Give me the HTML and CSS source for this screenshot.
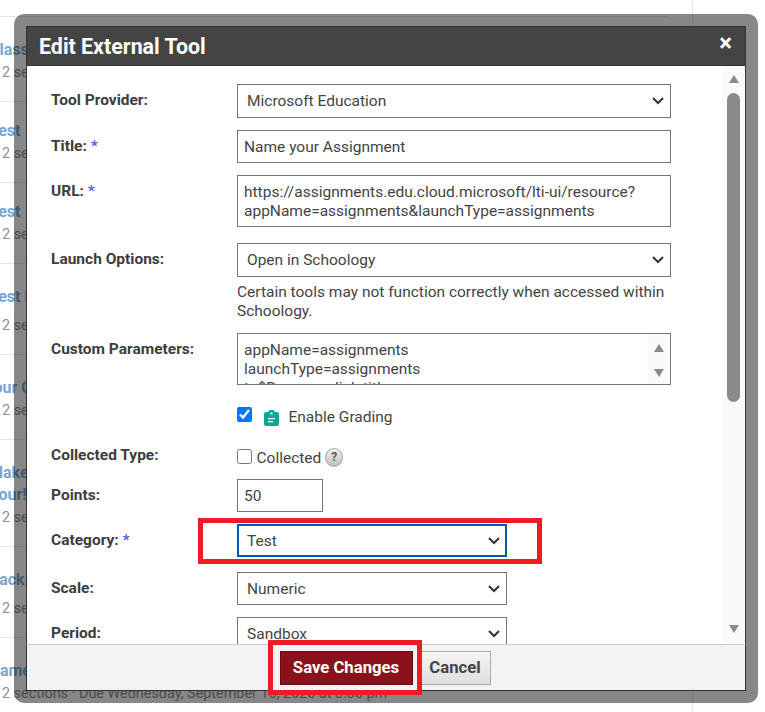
FILE: index.html
```html
<!DOCTYPE html>
<html lang="en">
  <head>
    <meta charset="UTF-8" />
    <meta name="viewport" content="width=device-width, initial-scale=1.0" />
    <title>Edit External Tool</title>
    <link rel="stylesheet" href="styles.css">
  </head>
  <body>
    <div class="page">
      <div class="list">
        <div class="item item-first">
          <div class="item-title">Class</div>
          <div class="item-sub">2 sections</div>
        </div>
        <div class="item item-short">
          <div class="item-title">Test</div>
          <div class="item-sub">2 sections</div>
        </div>
        <div class="item item-short">
          <div class="item-title">Test</div>
          <div class="item-sub">2 sections</div>
        </div>
        <div class="item">
          <div class="item-title">Test l</div>
          <div class="item-sub sub-far">2 sections</div>
        </div>
        <div class="item">
          <div class="item-title title-far">Your C</div>
          <div class="item-sub">2 sections</div>
        </div>
        <div class="item">
          <div class="item-title">Make</div>
          <div class="item-title">Your!</div>
          <div class="item-sub">2 sections</div>
        </div>
        <div class="item">
          <div class="item-title">Back</div>
          <div class="item-sub sub-far">2 sections</div>
        </div>
        <div class="item item-last">
          <div class="item-title">Game</div>
          <div class="item-sub">2 sections · Due Wednesday, September 16, 2026 at 3:30 pm ·</div>
        </div>
      </div>
    </div>

    <div class="modal">
      <div class="modal-head">
        <h1>Edit External Tool</h1>
        <span class="close">×</span>
      </div>
      <div class="modal-body">
        <form class="form">
          <div class="row row-provider">
            <label>Tool Provider:</label>
            <select class="field"><option>Microsoft Education</option></select>
          </div>
          <div class="row row-title">
            <label>Title: <span class="req">*</span></label>
            <input class="field" type="text" value="Name your Assignment" />
          </div>
          <div class="row row-url">
            <label>URL: <span class="req">*</span></label>
            <div class="field area area-url">https://assignments.edu.cloud.microsoft/lti-ui/resource?<br />appName=assignments&amp;launchType=assignments</div>
          </div>
          <div class="row row-launch">
            <label>Launch Options:</label>
            <div>
              <select class="field"><option>Open in Schoology</option></select>
              <p class="help">Certain tools may not function correctly when accessed within Schoology.</p>
            </div>
          </div>
          <div class="row row-custom">
            <label>Custom Parameters:</label>
            <div class="field area area-custom">
              <div class="area-text">appName=assignments<br />launchType=assignments<br />t=$Resource.link.title</div>
              <div class="area-scroll">
                <span class="arrow-up"></span>
                <span class="arrow-down"></span>
              </div>
            </div>
          </div>
          <div class="row row-grading">
            <span></span>
            <div class="grading">
              <input class="check" type="checkbox" checked />
              <svg class="grade-icon" width="15" height="16" viewBox="0 0 15 16">
                <path d="M2 2h2.500V1.500C4.500 .7 5.200 0 6 0h3c.8 0 1.500.7 1.500 1.500V2H13c1.100 0 2 .9 2 2v10c0 1.100-.9 2-2 2H2c-1.100 0-2-.9-2-2V4c0-1.100.9-2 2-2z" fill="#12a594" />
                <path d="M6.500 2.500h2v2h-2zM4 8h7v1.300H4zM4 11h5v1.300H4z" fill="#fff" />
              </svg>
              <span>Enable Grading</span>
            </div>
          </div>
          <div class="row row-collected">
            <label>Collected Type:</label>
            <div class="collected">
              <input class="check" type="checkbox" />
              <span>Collected</span>
              <span class="hint">?</span>
            </div>
          </div>
          <div class="row row-points">
            <label>Points:</label>
            <input class="field field-points" type="text" value="50" />
          </div>
          <div class="row row-category">
            <label>Category: <span class="req">*</span></label>
            <select class="field field-mid field-focus"><option>Test</option></select>
          </div>
          <div class="row row-scale">
            <label>Scale:</label>
            <select class="field field-mid"><option>Numeric</option></select>
          </div>
          <div class="row row-period">
            <label>Period:</label>
            <select class="field field-mid"><option>Sandbox</option></select>
          </div>
        </form>
        <div class="scrollbar">
          <span class="arrow-up"></span>
          <div class="scroll-track"><div class="scroll-thumb"></div></div>
          <span class="arrow-down"></span>
        </div>
      </div>
      <div class="modal-foot">
        <button class="btn btn-save" type="button">Save Changes</button>
        <button class="btn btn-cancel" type="button">Cancel</button>
      </div>
    </div>

    <!-- red boxes drawn on top of the screenshot -->
    <div class="mark mark-category"></div>
    <div class="mark mark-save"></div>
  </body>
</html>
```

FILE: styles.css
```css
* {
  box-sizing: border-box;
}
html,
body {
  height: 100%;
}
body {
  margin: 0;
  overflow: hidden;
  background-color: white;
  font-family: Roboto, "Liberation Sans", sans-serif;
  font-size: 15.5px;
  color: #444;
}

/* page behind the dialog */
.page {
  width: 693px;
  height: 712px;
  padding-top: 16px;
  border-right: 1px solid #e6e6e6;
}
.list {
  width: 669px;
  border-top: 1px solid #e6e6e6;
}
.item {
  padding: 22px 0 19px 2px;
  border-bottom: 1px solid #e6e6e6;
}
.item-short {
  padding-top: 18px;
}
.item-last {
  border-bottom: none;
}
.item-title {
  margin-left: -13px;
  font-size: 16px;
  line-height: 22px;
  font-weight: bold;
  color: #76a6d3;
}
.title-far {
  margin-left: -18px;
}
.item-sub {
  margin-top: 3px;
  font-size: 14.4px;
  line-height: 18px;
  color: #8b9096;
  white-space: nowrap;
}
.sub-far {
  margin-top: 9px;
}

/* dialog */
.modal {
  position: absolute;
  left: 14px;
  top: 14px;
  width: 744px;
  height: 689px;
  display: flex;
  flex-direction: column;
  border: 12px solid rgba(0, 0, 0, 0.47);
  border-radius: 10px;
  background-color: white;
  background-clip: padding-box;
}
.modal-head {
  display: flex;
  justify-content: space-between;
  height: 40px;
  padding: 0 13px 0 12px;
  background-color: #444;
  border: 1px solid #333;
  color: white;
}
.modal-head h1 {
  margin: 0;
  font-size: 21.4px;
  line-height: 40px;
  font-weight: bold;
}
.close {
  font-size: 24px;
  line-height: 32px;
  font-weight: bold;
}
.modal-body {
  flex: 1;
  display: flex;
  min-height: 0;
  border-right: 1px solid #333;
  border-left: 1px solid #333;
}
.form {
  flex: 1;
  min-width: 0;
  overflow: hidden;
  padding: 18px 0 0 24px;
}
.row {
  display: grid;
  grid-template-columns: 186px 434px;
  align-items: start;
}
.row label {
  margin-top: 6px;
  font-size: 15.5px;
  line-height: 20px;
  font-weight: bold;
  color: #3d3d3d;
}
.req {
  color: #5a5ff0;
}
.row-title,
.row-url,
.row-custom,
.row-points,
.row-category,
.row-period {
  margin-top: 12px;
}
.row-launch {
  margin-top: 16px;
}
.row-grading {
  margin-top: 22px;
}
.row-collected {
  margin-top: 23px;
}
.row-collected label {
  margin-top: -3px;
}
.row-scale {
  margin-top: 15px;
}
.field {
  display: block;
  width: 434px;
  height: 34px;
  padding: 0 6px;
  border: 1px solid #757575;
  border-radius: 0;
  background-color: white;
  font-family: Roboto, "Liberation Sans", sans-serif;
  font-size: 15.5px;
  color: #444;
}
input.field {
  height: 33px;
}
select.field {
  appearance: none;
  padding-left: 9px;
  background-image: url("data:image/svg+xml,%3Csvg xmlns='http://www.w3.org/2000/svg' width='12' height='8'%3E%3Cpath d='M1 1l5 5 5-5' fill='none' stroke='%23333' stroke-width='2'/%3E%3C/svg%3E");
  background-repeat: no-repeat;
  background-position: right 6px center;
}
.field-points {
  width: 86px;
}
select.field-mid {
  width: 270px;
  height: 33px;
}
select.field-focus {
  border: 2px solid #0057b7;
  padding-left: 8px;
  background-position: right 5px center;
}
.area {
  line-height: 19px;
  padding: 7px 6px 0;
  height: 52px;
  white-space: nowrap;
}
.area-custom {
  display: flex;
  padding: 0;
  overflow: hidden;
}
.area-text {
  flex: 1;
  padding: 7px 0 0 6px;
}
.area-scroll {
  width: 23px;
  display: flex;
  flex-direction: column;
  align-items: center;
  justify-content: space-between;
  padding: 10px 0 7px;
  background-color: #fafafa;
}
.help {
  margin: 6px 0 0;
  line-height: 19px;
}
.grading {
  display: flex;
  align-items: center;
  height: 18px;
}
.grade-icon {
  margin: 3px 0 0 12px;
}
.grading span {
  margin: 2px 0 0 10px;
}
.check {
  width: 14.500px;
  height: 14.500px;
  margin: 0;
  flex: none;
}
.grading .check {
  margin-top: -3px;
}
.collected {
  display: flex;
  align-items: center;
  height: 19px;
}
.collected .check {
  margin: -2px 5px 0 0;
}
.hint {
  width: 18px;
  height: 19px;
  margin-left: 4px;
  border-radius: 50%;
  border: 1px solid #aaa;
  background: linear-gradient(#f2f2f2, #bdbdbd);
  font-size: 12px;
  line-height: 17px;
  font-weight: bold;
  text-align: center;
  color: #555;
}
.scrollbar {
  width: 23px;
  display: flex;
  flex-direction: column;
  align-items: center;
  padding: 9px 0 11px;
  background-color: #fafafa;
}
.scroll-track {
  flex: 1;
  width: 100%;
  padding: 10px 5px 0 5px;
}
.scroll-thumb {
  height: 309px;
  border-radius: 7px;
  background-color: #8a8a8a;
}
.arrow-up {
  width: 0;
  height: 0;
  border-left: 5.500px solid transparent;
  border-right: 5.500px solid transparent;
  border-bottom: 8px solid #8a8a8a;
}
.arrow-down {
  width: 0;
  height: 0;
  border-left: 5.500px solid transparent;
  border-right: 5.500px solid transparent;
  border-top: 8px solid #8a8a8a;
}
.modal-foot {
  display: flex;
  justify-content: center;
  align-items: flex-start;
  gap: 7px;
  height: 47px;
  padding: 6px 2px 0 0;
  background-color: #f3f3f3;
  border: 1px solid #333;
  border-top: 1px solid #ccc;
}
.btn {
  height: 34px;
  padding: 0 0 2px;
  border-radius: 0;
  font-family: Roboto, "Liberation Sans", sans-serif;
  font-size: 16.700px;
  font-weight: bold;
}
.btn-save {
  width: 133px;
  background-color: #8b121c;
  border: 1px solid #6d0c14;
  color: white;
}
.btn-cancel {
  width: 71px;
  background: linear-gradient(#f6f6f6, #dedede);
  border: 1px solid #aaa;
  color: #444;
}

/* annotation boxes */
.mark {
  position: absolute;
  border: 5px solid #ed1c24;
}
.mark-category {
  left: 198px;
  top: 518px;
  width: 344px;
  height: 46px;
}
.mark-save {
  left: 268px;
  top: 640px;
  width: 154px;
  height: 55px;
}
```
